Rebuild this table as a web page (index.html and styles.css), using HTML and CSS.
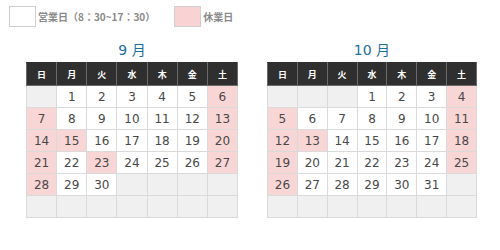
FILE: index.html
```html
<!DOCTYPE html>
<html lang="ja">
<head>
<meta charset="utf-8">
<link rel="stylesheet" href="styles.css">
</head>
<body>
<div class="legend">
  <div class="legend-item"><span class="swatch"></span><span class="legend-text">営業日（8：30~17：30）</span></div>
  <div class="legend-item"><span class="swatch pink"></span><span class="legend-text">休業日</span></div>
</div>
<div class="months">
  <div class="month m1">
    <div class="title">9 月</div>
    <table class="cal">
      <thead><tr><th>日</th><th>月</th><th>火</th><th>水</th><th>木</th><th>金</th><th>土</th></tr></thead>
      <tbody>
        <tr><td class="e"></td><td>1</td><td>2</td><td>3</td><td>4</td><td>5</td><td class="h">6</td></tr>
        <tr><td class="h">7</td><td>8</td><td>9</td><td>10</td><td>11</td><td>12</td><td class="h">13</td></tr>
        <tr><td class="h">14</td><td class="h">15</td><td>16</td><td>17</td><td>18</td><td>19</td><td class="h">20</td></tr>
        <tr><td class="h">21</td><td>22</td><td class="h">23</td><td>24</td><td>25</td><td>26</td><td class="h">27</td></tr>
        <tr><td class="h">28</td><td>29</td><td>30</td><td class="e"></td><td class="e"></td><td class="e"></td><td class="e"></td></tr>
        <tr><td class="e"></td><td class="e"></td><td class="e"></td><td class="e"></td><td class="e"></td><td class="e"></td><td class="e"></td></tr>
      </tbody>
    </table>
  </div>
  <div class="month m2">
    <div class="title">10 月</div>
    <table class="cal">
      <thead><tr><th>日</th><th>月</th><th>火</th><th>水</th><th>木</th><th>金</th><th>土</th></tr></thead>
      <tbody>
        <tr><td class="e"></td><td class="e"></td><td class="e"></td><td>1</td><td>2</td><td>3</td><td class="h">4</td></tr>
        <tr><td class="h">5</td><td>6</td><td>7</td><td>8</td><td>9</td><td>10</td><td class="h">11</td></tr>
        <tr><td class="h">12</td><td class="h">13</td><td>14</td><td>15</td><td>16</td><td>17</td><td class="h">18</td></tr>
        <tr><td class="h">19</td><td>20</td><td>21</td><td>22</td><td>23</td><td>24</td><td class="h">25</td></tr>
        <tr><td class="h">26</td><td>27</td><td>28</td><td>29</td><td>30</td><td>31</td><td class="e"></td></tr>
        <tr><td class="e"></td><td class="e"></td><td class="e"></td><td class="e"></td><td class="e"></td><td class="e"></td><td class="e"></td></tr>
      </tbody>
    </table>
  </div>
</div>
</body>
</html>
```
FILE: styles.css
```css
html, body {
  margin: 0;
  padding: 0;
  background: #ffffff;
}
body {
  font-family: "Noto Sans CJK JP", "DejaVu Sans", sans-serif;
}
.legend {
  display: flex;
  align-items: center;
  padding: 6px 0 0 9px;
  height: 21px;
}
.legend-item {
  display: flex;
  align-items: center;
}
.legend-item + .legend-item {
  margin-left: 19px;
}
.swatch {
  box-sizing: border-box;
  width: 27px;
  height: 21px;
  border: 1px solid #cfcfcf;
  background: #ffffff;
  margin-right: 2px;
}
.swatch.pink {
  background: #f9d3d3;
}
.legend-text {
  font-size: 10px;
  font-weight: bold;
  color: #8a8a8a;
}
.months {
  display: flex;
  padding-left: 26px;
  margin-top: 10px;
}
.m1 {
  width: 212px;
}
.m2 {
  width: 210px;
  margin-left: 29px;
}
.title {
  text-align: center;
  font-family: "DejaVu Sans", "Noto Sans CJK JP", sans-serif;
  font-size: 14px;
  color: #1d6f9e;
  height: 25px;
  line-height: 26px;
}
.cal {
  width: 100%;
  border-collapse: collapse;
  table-layout: fixed;
  font-family: "DejaVu Sans", "Noto Sans CJK JP", sans-serif;
}
.cal th {
  background: #2f2f2f;
  color: #ffffff;
  font-family: "Noto Sans CJK JP", sans-serif;
  font-size: 9px;
  font-weight: bold;
  height: 22px;
  padding: 0;
  border: 1px solid #6a6a6a;
  border-top-color: #2f2f2f;
}
.cal td {
  height: 21px;
  padding: 0;
  text-align: center;
  font-size: 12px;
  color: #484848;
  border: 1px solid #dadada;
  background: #ffffff;
}
.cal td.h {
  background: #f9d6d6;
}
.cal td.e {
  background: #f0f0f0;
}
```
